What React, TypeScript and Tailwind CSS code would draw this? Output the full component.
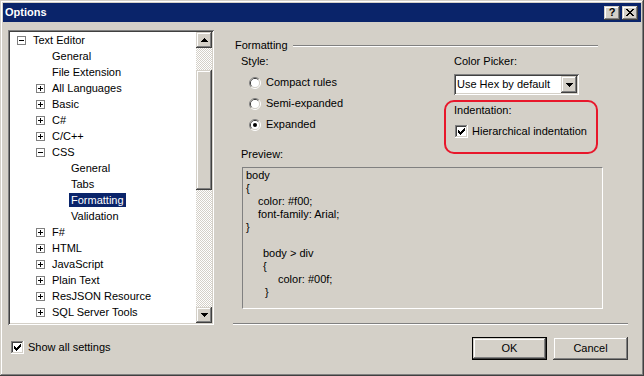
import React from "react";

const RAISED =
  "shadow-[inset_-1px_-1px_#404040,inset_1px_1px_#d4d0c8,inset_-2px_-2px_#808080,inset_2px_2px_#ffffff]";
const SUNKEN =
  "shadow-[inset_1px_1px_#808080,inset_-1px_-1px_#ffffff,inset_2px_2px_#404040,inset_-2px_-2px_#d4d0c8]";

type Item = { l: 0 | 1 | 2; t: string; e?: "+" | "-"; sel?: boolean };

const items: Item[] = [
  { l: 0, t: "Text Editor", e: "-" },
  { l: 1, t: "General" },
  { l: 1, t: "File Extension" },
  { l: 1, t: "All Languages", e: "+" },
  { l: 1, t: "Basic", e: "+" },
  { l: 1, t: "C#", e: "+" },
  { l: 1, t: "C/C++", e: "+" },
  { l: 1, t: "CSS", e: "-" },
  { l: 2, t: "General" },
  { l: 2, t: "Tabs" },
  { l: 2, t: "Formatting", sel: true },
  { l: 2, t: "Validation" },
  { l: 1, t: "F#", e: "+" },
  { l: 1, t: "HTML", e: "+" },
  { l: 1, t: "JavaScript", e: "+" },
  { l: 1, t: "Plain Text", e: "+" },
  { l: 1, t: "ResJSON Resource", e: "+" },
  { l: 1, t: "SQL Server Tools", e: "+" },
];

const levelPad: Record<number, string> = {
  0: "pl-[7px]",
  1: "pl-[26px]",
  2: "pl-[45px]",
};

function Expander({ sign }: { sign: "+" | "-" }) {
  return (
    <svg width="9" height="9" viewBox="0 0 9 9" shapeRendering="crispEdges">
      <rect x="0.5" y="0.5" width="8" height="8" fill="#fff" stroke="#808080" />
      <rect x="2" y="4" width="5" height="1" fill="#000" />
      {sign === "+" && <rect x="4" y="2" width="1" height="5" fill="#000" />}
    </svg>
  );
}

function Arrow({ dir }: { dir: "up" | "down" }) {
  const rows =
    dir === "up"
      ? [
          [3, 0, 1],
          [2, 1, 3],
          [1, 2, 5],
          [0, 3, 7],
        ]
      : [
          [0, 0, 7],
          [1, 1, 5],
          [2, 2, 3],
          [3, 3, 1],
        ];
  return (
    <svg width="7" height="4" viewBox="0 0 7 4" shapeRendering="crispEdges">
      {rows.map(([x, y, w], i) => (
        <rect key={i} x={x} y={y} width={w} height="1" fill="#000" />
      ))}
    </svg>
  );
}

function Check() {
  const cols = [
    [3, 5],
    [4, 6],
    [5, 7],
    [6, 6],
    [7, 5],
    [8, 4],
    [9, 3],
  ];
  return (
    <svg width="13" height="13" viewBox="0 0 13 13" shapeRendering="crispEdges">
      <rect x="0" y="0" width="12" height="1" fill="#808080" />
      <rect x="0" y="0" width="1" height="12" fill="#808080" />
      <rect x="1" y="1" width="10" height="1" fill="#404040" />
      <rect x="1" y="1" width="1" height="10" fill="#404040" />
      <rect x="0" y="12" width="13" height="1" fill="#fff" />
      <rect x="12" y="0" width="1" height="13" fill="#fff" />
      <rect x="1" y="11" width="11" height="1" fill="#d4d0c8" />
      <rect x="11" y="1" width="1" height="11" fill="#d4d0c8" />
      <rect x="2" y="2" width="9" height="9" fill="#fff" />
      {cols.map(([x, y], i) => (
        <rect key={i} x={x} y={y} width="1" height="3" fill="#000" />
      ))}
    </svg>
  );
}

function Radio({ on }: { on?: boolean }) {
  return (
    <svg width="12" height="12" viewBox="0 0 12 12">
      <path d="M2.11 9.89 A5.5 5.5 0 0 1 9.89 2.11" fill="none" stroke="#808080" strokeWidth="1" />
      <path d="M9.89 2.11 A5.5 5.5 0 0 1 2.11 9.89" fill="none" stroke="#ffffff" strokeWidth="1" />
      <path d="M2.82 9.18 A4.5 4.5 0 0 1 9.18 2.82" fill="none" stroke="#404040" strokeWidth="1" />
      <path d="M9.18 2.82 A4.5 4.5 0 0 1 2.82 9.18" fill="none" stroke="#d4d0c8" strokeWidth="1" />
      <circle cx="6" cy="6" r="4" fill="#fff" />
      {on && <circle cx="6" cy="6" r="2" fill="#000" />}
    </svg>
  );
}

function TreeRow({ it }: { it: Item }) {
  return (
    <div className={`h-[16px] flex items-center ${levelPad[it.l]}`}>
      <div className="w-[14px] h-[16px] flex items-center shrink-0">
        {it.e && <Expander sign={it.e} />}
      </div>
      <span
        className={`px-[2px] h-[14px] leading-[14px] whitespace-nowrap ${
          it.sel ? "bg-[#0a246a] text-white" : "text-black"
        }`}
      >
        {it.t}
      </span>
    </div>
  );
}

const codeLines: { t: string; pl: string }[] = [
  { t: "body", pl: "pl-0" },
  { t: "{", pl: "pl-0" },
  { t: "color: #f00;", pl: "pl-[12px]" },
  { t: "font-family: Arial;", pl: "pl-[12px]" },
  { t: "}", pl: "pl-0" },
  { t: "\u00a0", pl: "pl-0" },
  { t: "body > div", pl: "pl-[17px]" },
  { t: "{", pl: "pl-[17px]" },
  { t: "color: #00f;", pl: "pl-[32px]" },
  { t: "}", pl: "pl-[19px]" },
];

export default function App() {
  return (
    <div
      className={`w-[644px] h-[376px] bg-[#d4d0c8] p-[3px] flex flex-col text-[11px] text-black font-['Liberation_Sans',Arial,sans-serif] ${RAISED}`}
    >
      {/* Title bar */}
      <div className="h-[19px] bg-[#0a246a] flex items-center justify-between pl-[2px] pr-[3px] shrink-0">
        <span className="text-white font-bold text-[11px] leading-[19px]">Options</span>
        <div className="flex gap-[2px]">
          <div className={`w-[16px] h-[14px] bg-[#d4d0c8] flex items-center justify-center ${RAISED}`}>
            <span className="font-bold text-[11px] leading-[11px] text-black">?</span>
          </div>
          <div className={`w-[16px] h-[14px] bg-[#d4d0c8] flex items-center justify-center ${RAISED}`}>
            <svg width="8" height="7" viewBox="0 0 8 7" shapeRendering="crispEdges">
              {[0, 1, 2, 3, 4, 5, 6].map((i) => (
                <React.Fragment key={i}>
                  <rect x={i} y={i} width="2" height="1" fill="#000" />
                  <rect x={6 - i} y={i} width="2" height="1" fill="#000" />
                </React.Fragment>
              ))}
            </svg>
          </div>
        </div>
      </div>

      {/* Body */}
      <div className="flex flex-1 pt-[8px]">
        {/* Left column */}
        <div className="pl-[5px] w-[211px] shrink-0 flex flex-col">
          <div className={`w-[206px] h-[295px] bg-white flex ${SUNKEN}`}>
            <div className="flex-1 pt-[2px] pl-[2px] overflow-hidden">
              {items.map((it, i) => (
                <TreeRow key={i} it={it} />
              ))}
            </div>
            <div className="w-[16px] my-[2px] mr-[2px] flex flex-col">
              <div className={`h-[16px] bg-[#d4d0c8] flex items-center justify-center ${RAISED}`}>
                <Arrow dir="up" />
              </div>
              <div className="flex-1 bg-[image:conic-gradient(#ffffff_25%,#d4d0c8_0_50%,#ffffff_0_75%,#d4d0c8_0)] bg-[length:2px_2px]">
                <div className={`mt-[22px] h-[120px] bg-[#d4d0c8] ${RAISED}`} />
              </div>
              <div className={`h-[16px] bg-[#d4d0c8] flex items-center justify-center ${RAISED}`}>
                <Arrow dir="down" />
              </div>
            </div>
          </div>
          <div className="mt-[16px] ml-[3px] flex items-center gap-[4px] h-[13px]">
            <Check />
            <span className="leading-[13px]">Show all settings</span>
          </div>
        </div>

        {/* Right column */}
        <div className="ml-[19px] w-[395px] flex flex-col">
          {/* Group header */}
          <div className="mt-[9px] h-[13px] flex items-center pl-[2px]">
            <span className="leading-[13px]">Formatting</span>
            <div className="ml-[5px] mr-[30px] flex-1 h-[2px] border-t border-t-[#808080] border-b border-b-white" />
          </div>

          {/* Top row */}
          <div className="flex">
            <div className="w-[211px] pl-[8px] flex flex-col">
              <div className="mt-[3px] h-[13px] leading-[13px]">Style:</div>
              <div className="mt-[4px] flex flex-col">
                {[
                  { t: "Compact rules", on: false },
                  { t: "Semi-expanded", on: false },
                  { t: "Expanded", on: true },
                ].map((r) => (
                  <div key={r.t} className="h-[21px] flex items-center pl-[8px] gap-[5px]">
                    <Radio on={r.on} />
                    <span className="leading-[13px]">{r.t}</span>
                  </div>
                ))}
              </div>
              <div className="mt-[13px] h-[13px] leading-[13px]">Preview:</div>
            </div>

            <div className="w-[154px] flex flex-col">
              <div className="mt-[3px] ml-[10px] h-[13px] leading-[13px]">Color Picker:</div>
              <div className={`mt-[6px] ml-[10px] w-[125px] h-[21px] bg-white flex items-center p-[2px] ${SUNKEN}`}>
                <span className="flex-1 pl-[1px] leading-[13px] whitespace-nowrap">Use Hex by default</span>
                <div className={`w-[16px] h-[17px] bg-[#d4d0c8] flex items-center justify-center ${RAISED}`}>
                  <Arrow dir="down" />
                </div>
              </div>
              <div className="mt-[5px] h-[54px] border-2 border-[#e8172b] rounded-[10px] pl-[8px] flex flex-col">
                <div className="mt-[2px] h-[13px] leading-[13px]">Indentation:</div>
                <div className="mt-[8px] ml-[1px] flex items-center gap-[4px] h-[13px]">
                  <Check />
                  <span className="leading-[13px]">Hierarchical indentation</span>
                </div>
              </div>
            </div>
          </div>

          {/* Preview box */}
          <div className="mt-[6px] ml-[9px] w-[361px] h-[142px] border border-t-[#808080] border-l-[#808080] border-b-white border-r-white pl-[3px] pt-[1px]">
            {codeLines.map((c, i) => (
              <div key={i} className={`h-[13px] leading-[13px] whitespace-nowrap ${c.pl}`}>
                {c.t}
              </div>
            ))}
          </div>

          {/* Separator */}
          <div className="mt-[14px] h-[2px] border-t border-t-[#808080] border-b border-b-white" />

          {/* Buttons */}
          <div className="mt-[12px] flex justify-end gap-[6px]">
            <div className="w-[75px] h-[23px] border border-black">
              <div className={`w-full h-full bg-[#d4d0c8] flex items-center justify-center ${RAISED}`}>
                OK
              </div>
            </div>
            <div className={`w-[75px] h-[23px] bg-[#d4d0c8] flex items-center justify-center ${RAISED}`}>
              Cancel
            </div>
          </div>
        </div>
      </div>
    </div>
  );
}
